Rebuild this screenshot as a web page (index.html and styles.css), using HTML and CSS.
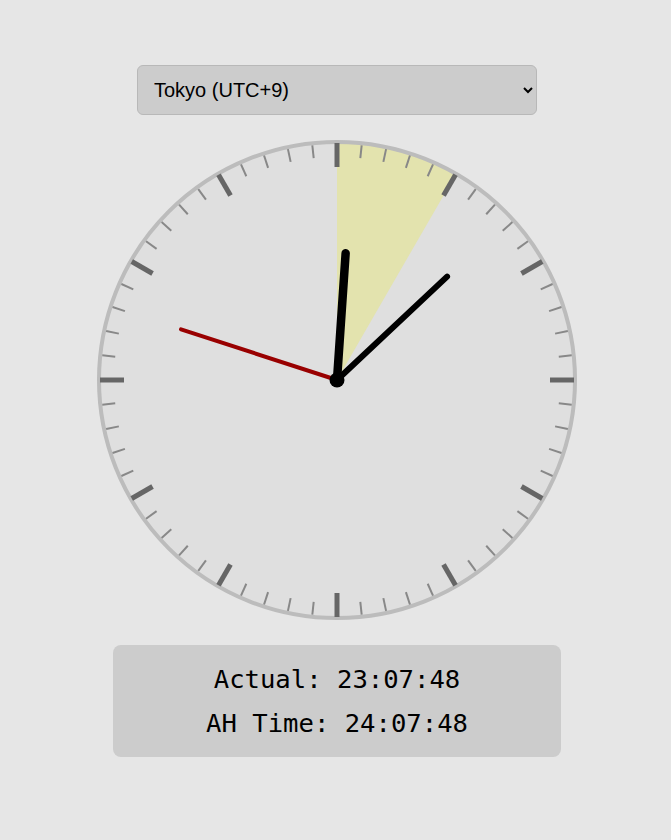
FILE: index.html
```html
<!DOCTYPE html>
<html>
<head>
<meta charset="utf-8">
<link rel="stylesheet" href="styles.css">
</head>
<body>
<main class="app">
  <select class="zone">
    <option>Tokyo (UTC+9)</option>
    <option>London (UTC+0)</option>
    <option>New York (UTC-5)</option>
  </select>
  <svg class="clock" width="480" height="480" viewBox="0 0 480 480">
    <circle cx="240" cy="240" r="238" fill="#dfdfdf"/>
    <path d="M240,240 L240,2 A238,238 0 0 1 359,33.9 Z" fill="#e3e3ae"/>
    <circle cx="240" cy="240" r="238" fill="none" stroke="#bcbcbc" stroke-width="4"/>
    <g class="minor" stroke="#888" stroke-width="2">
      <line x1="240" y1="4" x2="240" y2="17" transform="rotate(6 240 240)"/>
      <line x1="240" y1="4" x2="240" y2="17" transform="rotate(12 240 240)"/>
      <line x1="240" y1="4" x2="240" y2="17" transform="rotate(18 240 240)"/>
      <line x1="240" y1="4" x2="240" y2="17" transform="rotate(24 240 240)"/>
      <line x1="240" y1="4" x2="240" y2="17" transform="rotate(36 240 240)"/>
      <line x1="240" y1="4" x2="240" y2="17" transform="rotate(42 240 240)"/>
      <line x1="240" y1="4" x2="240" y2="17" transform="rotate(48 240 240)"/>
      <line x1="240" y1="4" x2="240" y2="17" transform="rotate(54 240 240)"/>
      <line x1="240" y1="4" x2="240" y2="17" transform="rotate(66 240 240)"/>
      <line x1="240" y1="4" x2="240" y2="17" transform="rotate(72 240 240)"/>
      <line x1="240" y1="4" x2="240" y2="17" transform="rotate(78 240 240)"/>
      <line x1="240" y1="4" x2="240" y2="17" transform="rotate(84 240 240)"/>
      <line x1="240" y1="4" x2="240" y2="17" transform="rotate(96 240 240)"/>
      <line x1="240" y1="4" x2="240" y2="17" transform="rotate(102 240 240)"/>
      <line x1="240" y1="4" x2="240" y2="17" transform="rotate(108 240 240)"/>
      <line x1="240" y1="4" x2="240" y2="17" transform="rotate(114 240 240)"/>
      <line x1="240" y1="4" x2="240" y2="17" transform="rotate(126 240 240)"/>
      <line x1="240" y1="4" x2="240" y2="17" transform="rotate(132 240 240)"/>
      <line x1="240" y1="4" x2="240" y2="17" transform="rotate(138 240 240)"/>
      <line x1="240" y1="4" x2="240" y2="17" transform="rotate(144 240 240)"/>
      <line x1="240" y1="4" x2="240" y2="17" transform="rotate(156 240 240)"/>
      <line x1="240" y1="4" x2="240" y2="17" transform="rotate(162 240 240)"/>
      <line x1="240" y1="4" x2="240" y2="17" transform="rotate(168 240 240)"/>
      <line x1="240" y1="4" x2="240" y2="17" transform="rotate(174 240 240)"/>
      <line x1="240" y1="4" x2="240" y2="17" transform="rotate(186 240 240)"/>
      <line x1="240" y1="4" x2="240" y2="17" transform="rotate(192 240 240)"/>
      <line x1="240" y1="4" x2="240" y2="17" transform="rotate(198 240 240)"/>
      <line x1="240" y1="4" x2="240" y2="17" transform="rotate(204 240 240)"/>
      <line x1="240" y1="4" x2="240" y2="17" transform="rotate(216 240 240)"/>
      <line x1="240" y1="4" x2="240" y2="17" transform="rotate(222 240 240)"/>
      <line x1="240" y1="4" x2="240" y2="17" transform="rotate(228 240 240)"/>
      <line x1="240" y1="4" x2="240" y2="17" transform="rotate(234 240 240)"/>
      <line x1="240" y1="4" x2="240" y2="17" transform="rotate(246 240 240)"/>
      <line x1="240" y1="4" x2="240" y2="17" transform="rotate(252 240 240)"/>
      <line x1="240" y1="4" x2="240" y2="17" transform="rotate(258 240 240)"/>
      <line x1="240" y1="4" x2="240" y2="17" transform="rotate(264 240 240)"/>
      <line x1="240" y1="4" x2="240" y2="17" transform="rotate(276 240 240)"/>
      <line x1="240" y1="4" x2="240" y2="17" transform="rotate(282 240 240)"/>
      <line x1="240" y1="4" x2="240" y2="17" transform="rotate(288 240 240)"/>
      <line x1="240" y1="4" x2="240" y2="17" transform="rotate(294 240 240)"/>
      <line x1="240" y1="4" x2="240" y2="17" transform="rotate(306 240 240)"/>
      <line x1="240" y1="4" x2="240" y2="17" transform="rotate(312 240 240)"/>
      <line x1="240" y1="4" x2="240" y2="17" transform="rotate(318 240 240)"/>
      <line x1="240" y1="4" x2="240" y2="17" transform="rotate(324 240 240)"/>
      <line x1="240" y1="4" x2="240" y2="17" transform="rotate(336 240 240)"/>
      <line x1="240" y1="4" x2="240" y2="17" transform="rotate(342 240 240)"/>
      <line x1="240" y1="4" x2="240" y2="17" transform="rotate(348 240 240)"/>
      <line x1="240" y1="4" x2="240" y2="17" transform="rotate(354 240 240)"/>
    </g>
    <g class="major" stroke="#666" stroke-width="5">
      <line x1="240" y1="3" x2="240" y2="27"/>
      <line x1="240" y1="3" x2="240" y2="27" transform="rotate(30 240 240)"/>
      <line x1="240" y1="3" x2="240" y2="27" transform="rotate(60 240 240)"/>
      <line x1="240" y1="3" x2="240" y2="27" transform="rotate(90 240 240)"/>
      <line x1="240" y1="3" x2="240" y2="27" transform="rotate(120 240 240)"/>
      <line x1="240" y1="3" x2="240" y2="27" transform="rotate(150 240 240)"/>
      <line x1="240" y1="3" x2="240" y2="27" transform="rotate(180 240 240)"/>
      <line x1="240" y1="3" x2="240" y2="27" transform="rotate(210 240 240)"/>
      <line x1="240" y1="3" x2="240" y2="27" transform="rotate(240 240 240)"/>
      <line x1="240" y1="3" x2="240" y2="27" transform="rotate(270 240 240)"/>
      <line x1="240" y1="3" x2="240" y2="27" transform="rotate(300 240 240)"/>
      <line x1="240" y1="3" x2="240" y2="27" transform="rotate(330 240 240)"/>
    </g>
    <line x1="240" y1="240" x2="240" y2="76" stroke="#990000" stroke-width="4" stroke-linecap="round" transform="rotate(288 240 240)"/>
    <line x1="240" y1="240" x2="240" y2="89" stroke="#000" stroke-width="6" stroke-linecap="round" transform="rotate(46.8 240 240)"/>
    <line x1="240" y1="240" x2="240" y2="113" stroke="#000" stroke-width="8.5" stroke-linecap="round" transform="rotate(3.9 240 240)"/>
    <circle cx="240" cy="240" r="7.5" fill="#000"/>
  </svg>
  <section class="readout">
    <div class="line">Actual: 23:07:48</div>
    <div class="line">AH Time: 24:07:48</div>
  </section>
</main>
</body>
</html>
```

FILE: styles.css
```css
html, body {
  margin: 0;
  padding: 0;
  background: #e6e6e6;
}
body {
  font-family: "Liberation Sans", Arial, sans-serif;
}
.app {
  display: flex;
  flex-direction: column;
  align-items: center;
  gap: 25px;
  padding: 65px 0 0 3px;
}
.zone {
  width: 400px;
  height: 50px;
  box-sizing: border-box;
  padding: 0 12px;
  font-family: "Liberation Sans", Arial, sans-serif;
  font-size: 20px;
  color: #000;
  background: #cccccc;
  border: 1px solid #b8b8b8;
  border-radius: 6px;
  outline: none;
}
.clock {
  display: block;
  overflow: visible;
}
.readout {
  width: 448px;
  box-sizing: border-box;
  padding: 12px 0;
  background: #cccccc;
  border-radius: 8px;
  text-align: center;
  font-family: "DejaVu Sans Mono", monospace;
  font-size: 25.6px;
  line-height: 44px;
  color: #000;
}
```
